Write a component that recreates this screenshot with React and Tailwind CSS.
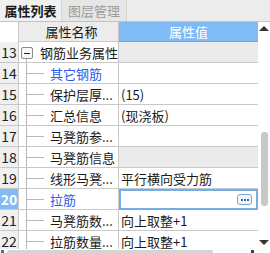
import React from 'react';

const rows = [
  { n: 13, name: '钢筋业务属性', value: '', group: true, root: true },
  { n: 14, name: '其它钢筋', value: '', blue: true },
  { n: 15, name: '保护层厚...', value: '(15)' },
  { n: 16, name: '汇总信息', value: '(现浇板)' },
  { n: 17, name: '马凳筋参...', value: '' },
  { n: 18, name: '马凳筋信息', value: '', group: true },
  { n: 19, name: '线形马凳...', value: '平行横向受力筋' },
  { n: 20, name: '拉筋', value: '', blue: true, selected: true },
  { n: 21, name: '马凳筋数...', value: '向上取整+1' },
  { n: 22, name: '拉筋数量...', value: '向上取整+1', last: true },
];

const font = { fontFamily: '"Noto Sans CJK SC", "Liberation Sans", sans-serif' };

function TreeLines({ root }) {
  if (root) {
    return (
      <div className="relative w-[21px] h-full shrink-0">
        <div className="absolute left-[2px] top-[5px] w-[12px] h-[12px] border border-[#8a8a8a] rounded-[2px] bg-[#f7f7f7] flex items-center justify-center">
          <div className="w-[6px] h-px bg-[#222]" />
        </div>
        <div className="absolute left-[7px] top-[17px] bottom-0 w-px bg-[#b8b8b8]" />
      </div>
    );
  }
  return (
    <div className="relative w-[31px] h-full shrink-0">
      <div className="absolute left-[7px] top-0 h-full w-px bg-[#b8b8b8]" />
      <div className="absolute left-[8px] top-[10px] w-[17px] h-px bg-[#b8b8b8]" />
    </div>
  );
}

export default function App() {
  return (
    <div className="w-[270px] h-[253px] overflow-hidden bg-white text-[13px] text-[#1a1a1a] leading-none" style={font}>
      <div className="flex h-[22px] bg-[#ececec] border-b border-[#c4c4c4]">
        <div className="w-[62px] flex items-center justify-center font-bold text-[13px] bg-[#f0f0f0] border-r border-[#d4d4d4]">属性列表</div>
        <div className="w-[65px] flex items-center justify-center text-[13px] text-[#9c9c9c] bg-[#e6e6e6] border-r border-[#d4d4d4]">图层管理</div>
        <div className="flex-1" />
      </div>
      <div className="flex h-[227px] overflow-hidden">
        <div className="w-[258px]">
          <div className="grid grid-cols-[19px_100px_139px] h-[20px]">
            <div className="bg-white border-r border-[#c8c8c8]" />
            <div className="bg-[#ececec] border-r border-[#c8c8c8] border-b border-b-[#c8c8c8] flex items-center justify-center pl-[6px]">属性名称</div>
            <div className="bg-[#80bbf6] border-b border-[#6aa6e6] flex items-center justify-center text-white">属性值</div>
          </div>
          {rows.map((r) => (
            <div key={r.n} className="grid grid-cols-[19px_100px_139px] h-[21px]">
              <div className={`flex items-center justify-center text-[14px] border-r border-b border-[#c8c8c8] ${r.selected ? 'bg-[#80bbf6] text-white font-bold' : 'bg-[#f0f0f0] text-[#222]'}`}>{r.n}</div>
              <div className="flex items-center border-r border-b border-[#c8c8c8] bg-white overflow-hidden whitespace-nowrap">
                <TreeLines root={r.root} />
                <span className={r.blue ? 'text-[#2d5bea]' : ''}>{r.name}</span>
              </div>
              {r.selected ? (
                <div className="flex items-center justify-end bg-white border-2 border-[#74aeea] pr-[4px]">
                  <div className="w-[15px] h-[11px] rounded-[3px] border border-[#7aa6d6] bg-[#f4f8fc] flex items-center justify-center gap-[1px]">
                    <div className="w-[2px] h-[2px] bg-[#3d6fa8]" />
                    <div className="w-[2px] h-[2px] bg-[#3d6fa8]" />
                    <div className="w-[2px] h-[2px] bg-[#3d6fa8]" />
                  </div>
                </div>
              ) : (
                <div className={`flex items-center pl-[2px] border-b border-[#c8c8c8] whitespace-nowrap overflow-hidden ${r.group ? 'bg-[#ebebeb]' : 'bg-white'}`}>{r.value}</div>
              )}
            </div>
          ))}
        </div>
        <div className="w-[12px] flex flex-col items-center bg-white">
          <div className="mt-[4px] w-0 h-0 border-l-[5px] border-r-[5px] border-b-[5px] border-l-transparent border-r-transparent border-b-[#333]" />
          <div className="mt-[101px] w-[7px] h-[74px] rounded-[3px] bg-[#c8c8c8]" />
          <div className="mt-[34px] w-0 h-0 border-l-[5px] border-r-[5px] border-t-[5px] border-l-transparent border-r-transparent border-t-[#333]" />
        </div>
      </div>
      <div className="flex h-[4px] items-end bg-white">
        <div className="w-[3px] h-[3px] ml-[1px] bg-[#666]" />
        <div className="ml-[3px] w-[206px] h-[3px] rounded-t-[2px] bg-[#d4d4d4]" />
        <div className="ml-[38px] w-[3px] h-[3px] bg-[#444]" />
      </div>
    </div>
  );
}
